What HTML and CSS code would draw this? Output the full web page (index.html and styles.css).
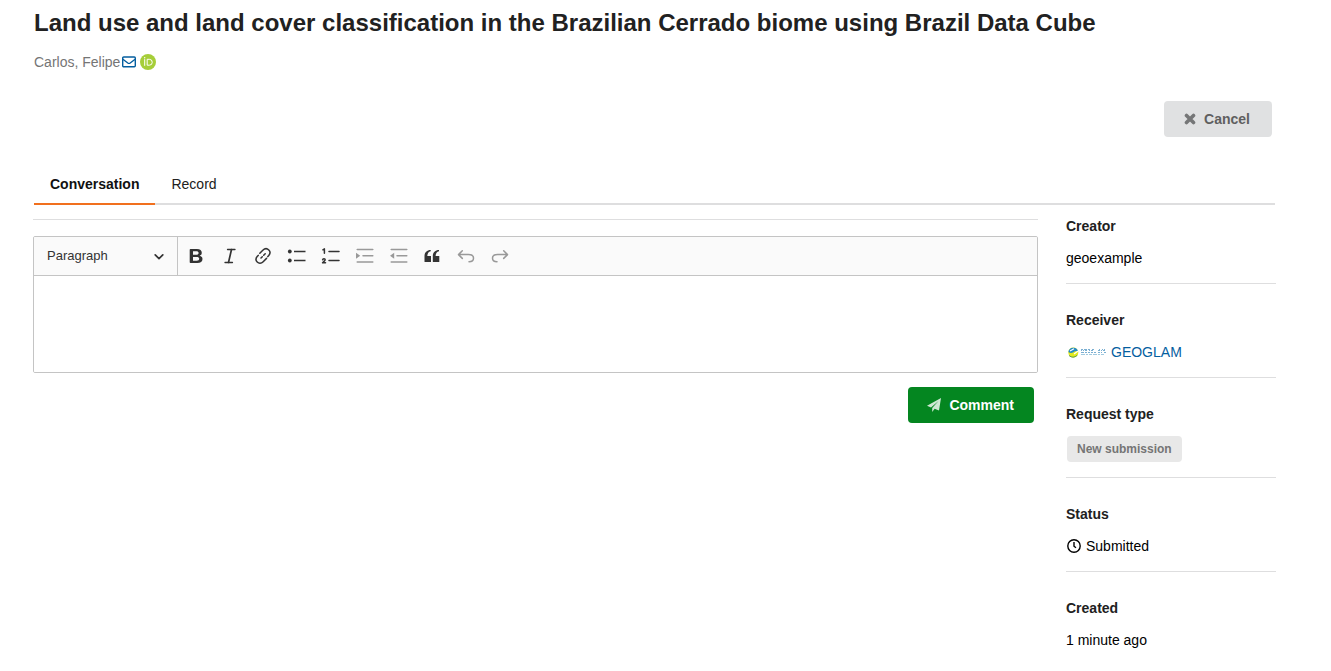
FILE: index.html
```html
<!DOCTYPE html>
<html lang="en">
<head>
<meta charset="utf-8">
<meta name="viewport" content="width=device-width, initial-scale=1">
<title>Land use and land cover classification</title>
<link rel="stylesheet" href="styles.css">
</head>
<body>
<div class="page">
  <header>
    <h1 class="title">Land use and land cover classification in the Brazilian Cerrado biome using Brazil Data Cube</h1>
    <div class="author">
      <span>Carlos, Felipe</span>
      <a class="mail" href="#" aria-label="Send email"><svg width="14" height="14" viewBox="0 0 14 14" fill="none" stroke="currentColor" stroke-width="1.4"><rect x=".7" y="2" width="12.6" height="9.800" rx="1"/><path d="M.9 4.2 5.8 8q1.200.8 2.400 0l4.900-3.800"/></svg></a>
      <a class="orcid" href="#" aria-label="ORCID profile"><svg width="16" height="16" viewBox="0 0 16 16"><circle cx="8" cy="8" r="8" fill="#a6ce39"/><path d="M4.700 5.200v6.600M7.200 5.300h2.100a2.900 2.900 0 0 1 0 5.900H7.200z" fill="none" stroke="#fff" stroke-width="1"/><circle cx="4.700" cy="3.700" r=".7" fill="#fff"/></svg></a>
    </div>
  </header>

  <div class="actions">
    <button class="button cancel" type="button"><svg width="12" height="12" viewBox="0 0 12 12" stroke="currentColor" stroke-width="3.6" stroke-linecap="round"><path d="m2.500 2.500 7 7M9.500 2.500l-7 7"/></svg>Cancel</button>
  </div>

  <nav class="tabs">
    <a class="tab active" href="#">Conversation</a>
    <a class="tab" href="#">Record</a>
  </nav>

  <div class="columns">
    <main class="conversation">
      <div class="editor">
        <div class="toolbar">
          <div class="format">
            <select aria-label="Block format"><option>Paragraph</option></select>
            <svg class="chevron" width="10" height="10" viewBox="0 0 10 10" fill="none" stroke="currentColor" stroke-width="1.7" stroke-linecap="round" stroke-linejoin="round"><path d="m1.200 3.800 3.800 3.800L8.800 3.800"/></svg>
          </div>
          <div class="tools">
            <button class="tool" type="button" aria-label="Bold"><svg viewBox="0 0 24 24"><path fill="currentColor" fill-rule="evenodd" d="M6.500 5h6.400c3.200 0 4.900 1.400 4.900 3.700 0 1.500-.8 2.600-2.200 3.100 1.900.4 2.900 1.600 2.900 3.300 0 2.500-1.900 3.900-5.200 3.900H6.500q-.8 0-.8-.8V5.800Q5.700 5 6.500 5zM9 7.300v3.500h3.200c1.600 0 2.400-.6 2.400-1.800s-.8-1.700-2.400-1.700zm0 5.700v3.700h3.600c1.700 0 2.600-.6 2.600-1.900 0-1.200-.9-1.800-2.600-1.800z"/></svg></button>
            <button class="tool" type="button" aria-label="Italic"><svg viewBox="0 0 24 24" class="line"><path stroke-width="1.300" d="M9.500 5.500H17M7 18.500h7.500"/><path stroke-width="1.700" d="m13.500 5.500-3 13"/></svg></button>
            <button class="tool" type="button" aria-label="Link"><svg viewBox="0 0 24 24" class="line"><path stroke-width="1.500" d="M8.800 9.300 11.800 6.300c2-2 4.500-1.800 6-.3s1.500 3.800-.2 5.700L16.800 12.600M15.500 14.400l-3.300 3.300c-2 2-4.500 1.800-6 .3s-1.500-3.800.2-5.700L7.200 11.400M10 14l1.300-1.300M12.700 11.300l1.500-1.600M13.800 17.300"/></svg></button>
            <button class="tool" type="button" aria-label="Bulleted list"><svg viewBox="0 0 24 24"><g fill="currentColor"><circle cx="4.800" cy="7.500" r="1.900"/><circle cx="4.800" cy="16.500" r="1.900"/><path d="M9 6.700h11.500v1.600H9zM9 15.700h11.500v1.600H9z"/></g></svg></button>
            <button class="tool" type="button" aria-label="Numbered list"><svg viewBox="0 0 24 24" class="line"><path d="M10 7.500h10M10 16.500h10"/><path stroke-width="1.500" d="m3.900 5.800 1.500-.9v4.400M3.600 15.800c.2-1.500 2.700-1.400 2.500.1-.1 1-1.500 1.700-2.500 2.900h2.900"/></svg></button>
            <button class="tool" type="button" aria-label="Increase indent" disabled><svg viewBox="0 0 24 24" class="line"><path d="M4.200 5.500h15.600M10 11.800h9.800M4.200 18h15.600"/><path fill="currentColor" stroke="none" d="m3 8.800 4.200 3-4.200 3z"/></svg></button>
            <button class="tool" type="button" aria-label="Decrease indent" disabled><svg viewBox="0 0 24 24" class="line"><path d="M4.200 5.500h15.600M10 11.800h9.800M4.200 18h15.600"/><path fill="currentColor" stroke="none" d="m7.200 8.800-4.200 3 4.200 3z"/></svg></button>
            <button class="tool" type="button" aria-label="Block quote"><svg viewBox="0 0 24 24"><path fill="currentColor" d="M10.700 6v1.200C8.500 7.800 7.500 9.200 7.300 12H11v6H5q-.5 0-.5-.5V12C4.500 8.500 7 6 10.700 6zM19 6v1.200c-2.200.6-3.200 2-3.400 4.800h3.700v6h-6q-.5 0-.5-.5V12C12.800 8.500 15.300 6 19 6z"/></svg></button>
            <button class="tool" type="button" aria-label="Undo" disabled><svg viewBox="0 0 24 24" class="line"><path d="M8.300 6.800 4.500 10.600l3.800 3.800M4.500 10.600h10c3.200 0 5 1.500 5 3.600s-1.800 3.500-4.500 3.500"/></svg></button>
            <button class="tool" type="button" aria-label="Redo" disabled><svg viewBox="0 0 24 24" class="line"><path d="m15.700 6.800 3.800 3.800-3.800 3.800M19.500 10.600h-10c-3.200 0-5 1.500-5 3.600s1.800 3.500 4.500 3.500"/></svg></button>
          </div>
        </div>
        <textarea class="message" aria-label="Comment text"></textarea>
      </div>
      <div class="submit">
        <button class="button comment" type="button"><svg width="14" height="14" viewBox="0 0 14 14" fill="currentColor"><path d="M14 0 12 12.500 7.600 10.800 5.200 14V10L11.500 3 4 9.400 0 7.700z"/></svg>Comment</button>
      </div>
    </main>

    <aside class="details">
      <section class="detail"><h2>Creator</h2><div class="value">geoexample</div></section>
      <section class="detail"><h2>Receiver</h2><div class="value receiver">
        <svg class="logo" width="38" height="12" viewBox="0 0 38 12" aria-hidden="true"><circle cx="5.300" cy="6.500" r="5" fill="#e3ea1f"/><path d="M.4 6A5 5 0 0 1 10.200 5.500Q7 4 5 6.500 2.500 7.500.4 6z" fill="#2389c5"/><path d="m2 5 4-2.200M6 8l4-3" stroke="#fff" stroke-width="1.200"/><path d="M1 9.500q4 3.500 8.300-.2" fill="none" stroke="#5f9c43"/><g fill="none" stroke="#7aafd2" stroke-width="1"><path d="M13 3.500h2m1 0h3m1 0h2m2 0h2m5 0h1m2 0h1m1 0h1"/><path d="M13 4.500h1m1 0h1m1 0h2m2 0h1m1 0h2m5 0h2m1 0h1m1 0h2"/><path d="M13 6.500h3m1 0h2m1 0h2m1 0h2m1 0h2m2 0h2m1 0h1m2 0h2"/><path d="M13 8.500h4m1 0h2m1 0h3m1 0h4m1 0h2m1 0h3" stroke="#a1c9df"/></g></svg>
        <a href="#">GEOGLAM</a></div></section>
      <section class="detail"><h2>Request type</h2><div class="value"><span class="badge">New submission</span></div></section>
      <section class="detail"><h2>Status</h2><div class="value status"><svg width="14" height="14" viewBox="0 0 14 14" fill="none" stroke="currentColor" stroke-width="1.400"><circle cx="7" cy="7" r="6.200"/><path d="M7 3v4.200l2 1.500"/></svg>Submitted</div></section>
      <section class="detail"><h2>Created</h2><div class="value">1 minute ago</div></section>
    </aside>
  </div>
</div>
</body>
</html>
```

FILE: styles.css
```css
* { box-sizing: border-box; }

body {
  margin: 0;
  background: #fff;
  color: #000;
  font: 14px/20px "Liberation Sans", Arial, sans-serif;
}

.page { padding: 8px 56px 0 34px; }

a { color: #045e9f; text-decoration: none; }

.title {
  margin: 0;
  color: #212121;
  font-size: 24px;
  line-height: 30px;
}

.author {
  display: flex;
  align-items: center;
  height: 20px;
  margin-top: 14px;
  color: #757575;
}

.author svg, .button svg, .status svg { display: block; }
.mail { margin: 0 4px 0 2px; }

.actions {
  display: flex;
  justify-content: flex-end;
  margin-top: 29px;
  padding-right: 3px;
}

.button {
  display: flex;
  align-items: center;
  height: 36px;
  border: 0;
  border-radius: 4px;
  font: bold 14px/20px "Liberation Sans", Arial, sans-serif;
}

.cancel {
  gap: 8px;
  padding: 0 22px 0 20px;
  background: #e0e1e2;
  color: #5f5f5f;
}

.cancel svg { color: #757677; }

.tabs {
  display: flex;
  margin-top: 27px;
  border-bottom: 2px solid #dededf;
}

.tab {
  margin-bottom: -2px;
  padding: 10px 16px 9px;
  border-bottom: 2px solid transparent;
  color: #212121;
}

.tab.active {
  border-color: #f1701e;
  color: #111;
  font-weight: bold;
}

.columns {
  display: grid;
  grid-template-columns: minmax(0, 1fr) 210px;
  gap: 28px;
  margin: 0 -1px;
}

.conversation {
  margin-top: 14px;
  border-top: 1px solid #dededf;
}

.editor {
  margin-top: 16px;
  overflow: hidden;
  border: 1px solid #c4c4c4;
  border-radius: 2px;
}

.toolbar {
  display: flex;
  height: 39px;
  border-bottom: 1px solid #c4c4c4;
  background: #fafafa;
}

.format {
  display: grid;
  align-items: center;
  width: 144px;
  border-right: 1px solid #c4c4c4;
}

.format select, .chevron { grid-area: 1 / 1; }

.format select {
  width: 100%;
  height: 38px;
  padding: 0 32px 0 13px;
  border: 0;
  appearance: none;
  background: transparent;
  color: #333;
  font: 13px/20px "Liberation Sans", Arial, sans-serif;
}

.chevron {
  justify-self: end;
  margin-right: 13px;
  color: #333;
  pointer-events: none;
}

.tools {
  display: flex;
  align-items: center;
  width: 339px;
  padding-left: 1px;
}

.tool {
  display: grid;
  flex: 1;
  place-items: center;
  height: 34px;
  padding: 0;
  border: 0;
  background: none;
  color: #333;
}

.tool:disabled { color: #999; }
.tool svg { width: 24px; height: 24px; }

.line {
  fill: none;
  stroke: currentColor;
  stroke-width: 1.5;
  stroke-linecap: round;
  stroke-linejoin: round;
}

.message {
  display: block;
  width: 100%;
  height: 96px;
  padding: 12px;
  border: 0;
  outline: 0;
  resize: none;
  font: inherit;
}

.submit {
  display: flex;
  justify-content: flex-end;
  margin: 14px 4px 0 0;
}

.comment {
  gap: 8px;
  padding: 0 20px 0 19px;
  background: #048620;
  color: #fff;
}

.comment svg { color: #cee7d3; }

.details { padding-top: 11px; }

.detail {
  margin-bottom: 26px;
  padding-bottom: 15px;
  border-bottom: 1px solid #dededf;
}

.detail:last-child { margin: 0; padding: 0; border: 0; }

.detail h2 {
  margin: 0 0 12px;
  color: #212121;
  font-size: 14px;
  line-height: 20px;
}

.value { display: flex; align-items: center; }
.receiver { gap: 5px; padding-left: 2px; }
.status { gap: 5px; padding-left: 1px; }

.badge {
  margin-left: 1px;
  padding: 3px 10px;
  border-radius: 4px;
  background: #e8e8e8;
  color: #757575;
  font-size: 12px;
  font-weight: bold;
}
```
